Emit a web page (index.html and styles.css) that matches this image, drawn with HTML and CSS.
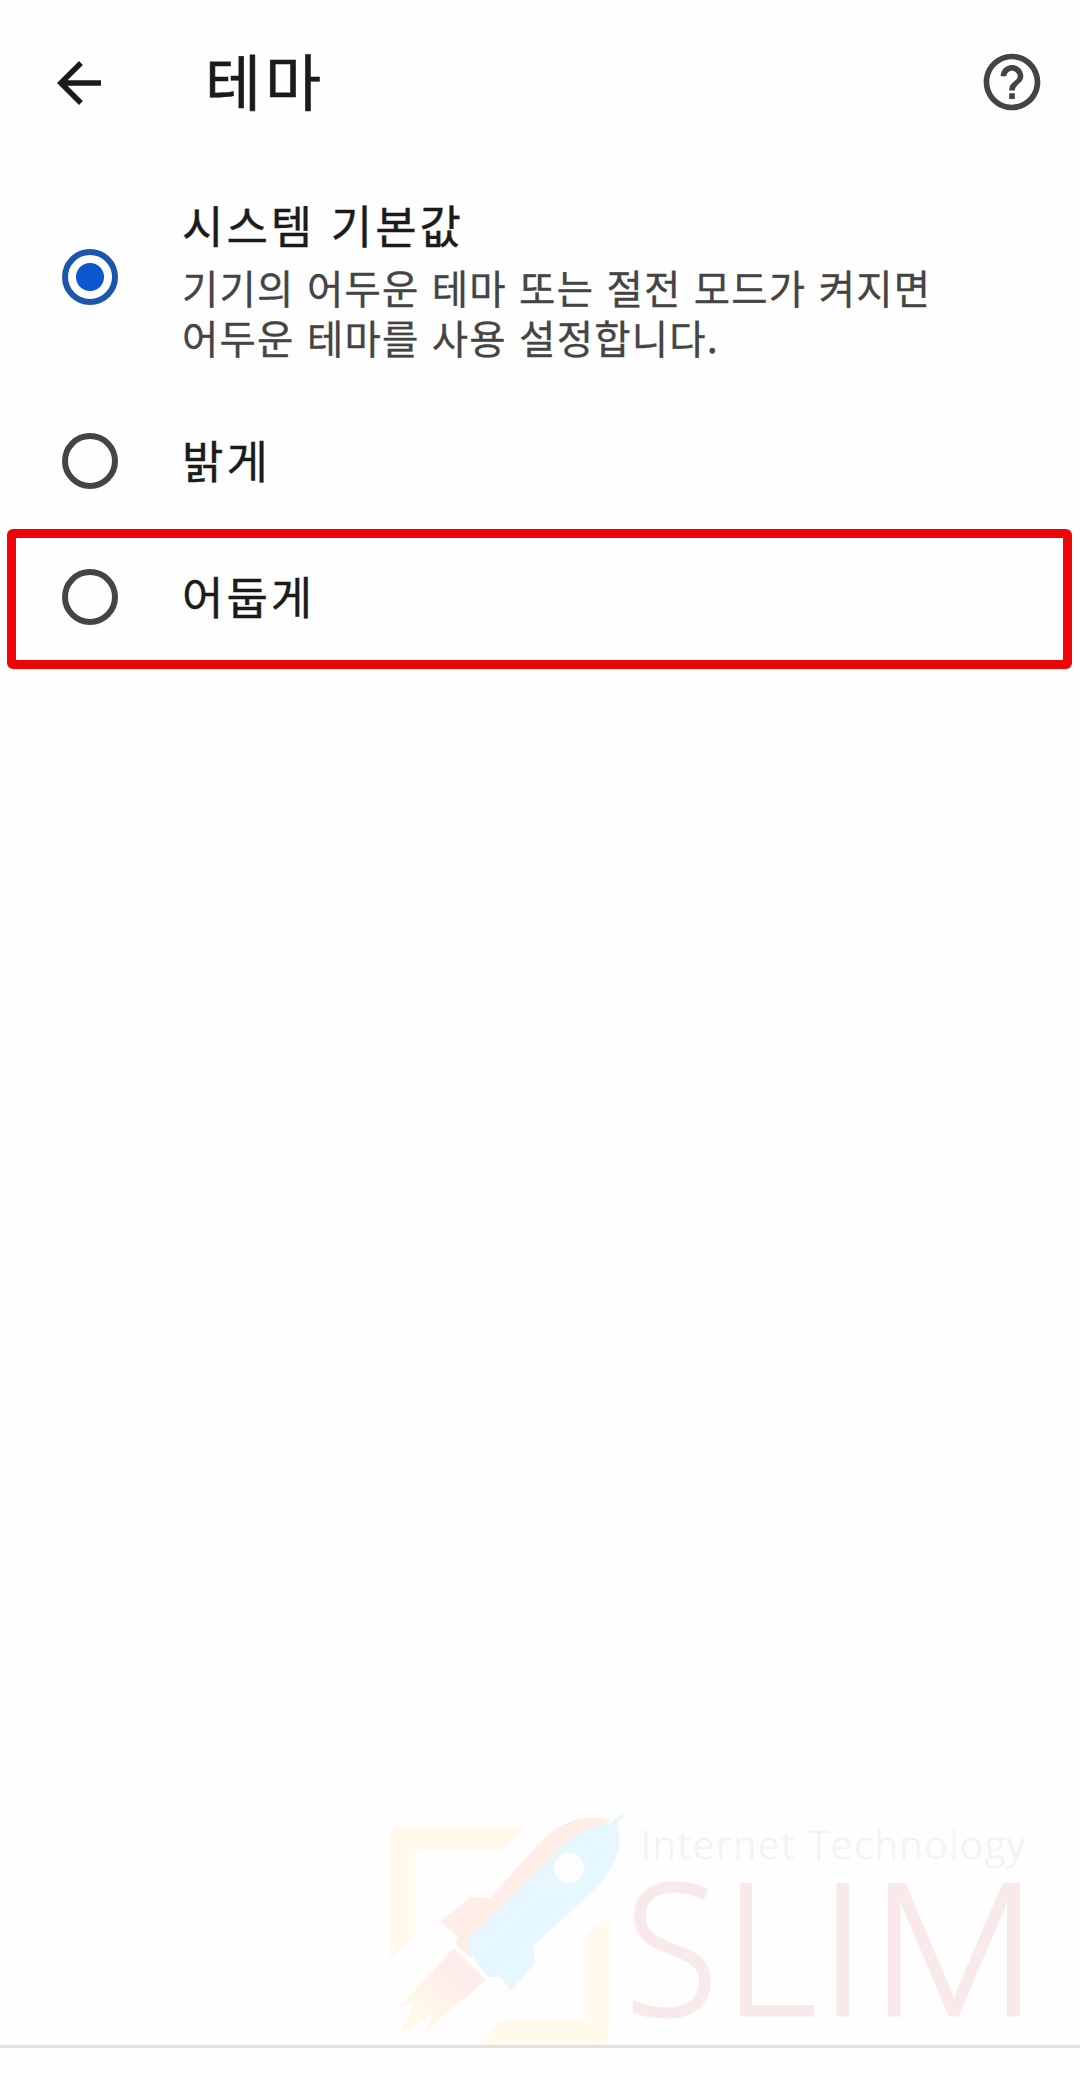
FILE: index.html
```html
<!DOCTYPE html>
<html lang="ko">
  <head>
    <meta charset="utf-8">
    <title>테마</title>
    <link rel="stylesheet" href="styles.css">
  </head>
  <body>
    <header>
      <svg class="icon back" viewBox="0 0 24 24"><path d="M20 11H7.83l5.59-5.59L12 4l-8 8 8 8 1.41-1.41L7.83 13H20v-2z"/></svg>
      <h1>테마</h1>
      <svg class="icon help" viewBox="0 0 24 24"><path d="M11 18h2v-2h-2v2zm1-16C6.48 2 2 6.48 2 12s4.48 10 10 10 10-4.48 10-10S17.52 2 12 2zm0 18c-4.41 0-8-3.59-8-8s3.59-8 8-8 8 3.59 8 8-3.59 8-8 8zm0-14c-2.21 0-4 1.79-4 4h2c0-1.1.9-2 2-2s2 .9 2 2c0 2-3 1.75-3 5h2c0-2.25 3-2.5 3-5 0-2.21-1.79-4-4-4z"/></svg>
    </header>
    <main>
      <div class="option system">
        <span class="radio checked"></span>
        <div class="label">
          <h2>시스템 기본값</h2>
          <p>기기의 어두운 테마 또는 절전 모드가 켜지면<br>어두운 테마를 사용 설정합니다.</p>
        </div>
      </div>
      <div class="option light">
        <span class="radio"></span>
        <h2>밝게</h2>
      </div>
      <div class="option dark">
        <span class="radio"></span>
        <h2>어둡게</h2>
      </div>
    </main>
    <footer>
      <!-- logo -->
      <svg class="logo" viewBox="0 0 670 255">
        <defs>
          <linearGradient id="flame" x1="1" y1="0" x2="0" y2="1">
            <stop offset=".35" stop-color="#fdeeeb"/>
            <stop offset=".75" stop-color="#fef9ea"/>
          </linearGradient>
        </defs>
        <g fill="#fffaec">
          <path d="M20 170V47q0-12 12-12H156L131 60H45v85z"/>
          <path d="M239 127v116q0 12-12 12H109l22-25h84v-85z"/>
        </g>
        <path fill="url(#flame)" d="M84 158l32 32-44 37-17 17 7-19-33 19 16-32-19 8 17-18z"/>
        <path fill="#ffedea" d="M240 30q-34-10-66 18l-54 60-20-1-30 25 18 14-3 7 15 15z"/>
        <path fill="#e6f7ff" d="M252 24l-10 8q-26 7-41 16L100 148q-6 10 0 16l18 23h13l10 14 24-28-2-17 66-60q27-34 18-63l7-7z"/>
        <circle cx="199" cy="78" r="15" fill="#fefefe"/>
        <text class="tagline" x="271" y="69" textLength="384">Internet Technology</text>
        <text class="brand" y="225"><tspan x="255" textLength="93" lengthAdjust="spacingAndGlyphs">S</tspan><tspan x="353">L</tspan><tspan x="450">I</tspan><tspan x="500" textLength="168" lengthAdjust="spacingAndGlyphs">M</tspan></text>
      </svg>
    </footer>
  </body>
</html>
```
FILE: styles.css
```css
body{
  margin: 0;
  height: 2080px;
  display: flex;
  flex-direction: column;
  background-color: #fefefe;
  color: #1b1b1b;
  font-family: "Noto Sans CJK KR", sans-serif;
}

h1, h2, p{
  margin: 0;
  font-weight: 400;
  white-space: nowrap;
}

header{
  display: flex;
  align-items: center;
  height: 165px;
  padding: 0 34px 1px 46px;
}

.icon{
  width: 68px;
  height: 68px;
}

.back{
  width: 66px;
  fill: #1b1b1b;
}

.help{
  margin-left: auto;
  margin-bottom: 2px;
  fill: #444;
}

h1{
  margin-left: 93px;
  padding-bottom: 5px;
  font-size: 61px;
  line-height: 90px;
  letter-spacing: 4px;
  -webkit-text-stroke: .6px;
}

.option{
  display: flex;
  align-items: center;
  box-sizing: border-box;
  padding-left: 62px;
  gap: 64px;
}

.system{
  height: 222px;
}

.light{
  height: 141px;
  padding-top: 4px;
}

.dark{
  height: 140px;
  margin: 0 8px 0 7px;
  padding-left: 46px;
  padding-bottom: 4px;
  border: 9px solid #ee0508;
  border-radius: 6px;
}

h2{
  padding-bottom: 3px;
  font-size: 45px;
  line-height: 63px;
  letter-spacing: 3px;
  -webkit-text-stroke: .4px;
}

.system h2{
  padding-bottom: 6px;
}

p{
  color: #444;
  font-size: 39.5px;
  line-height: 50px;
  letter-spacing: 1.2px;
  -webkit-text-stroke: .3px;
}

.radio{
  box-sizing: border-box;
  flex: none;
  width: 56px;
  height: 56px;
  border: 6px solid #444;
  border-radius: 50%;
}

.checked{
  border-color: #1a56ab;
  background: radial-gradient(circle, #0b57d0 13.5px, transparent 14.5px);
}

footer{
  margin-top: auto;
  height: 255px;
  padding-left: 370px;
  margin-bottom: 32px;
  border-bottom: 3px solid #e1e1e1;
}

.logo{
  display: block;
  width: 670px;
  height: 255px;
}

.tagline, .brand{
  font-family: "Open Sans", sans-serif;
  font-weight: 300;
}

.tagline{
  fill: #f3f3f3;
  stroke: #f3f3f3;
  stroke-width: .5px;
  font-size: 39px;
}

.brand{
  fill: #fae9ea;
  stroke: #fae9ea;
  stroke-width: 3px;
  font-size: 182px;
}
```
